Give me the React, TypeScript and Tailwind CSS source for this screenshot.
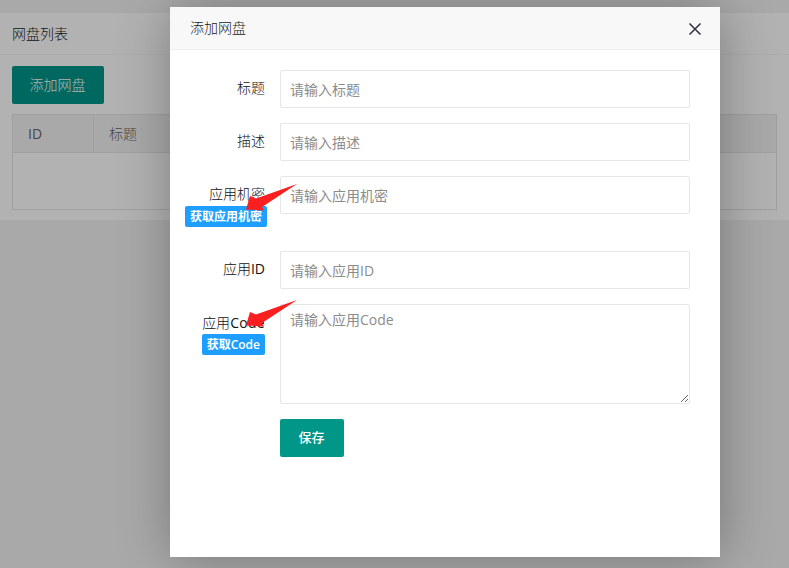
import React from "react";

const font = { fontFamily: '"Open Sans", "Noto Sans CJK SC", "Liberation Sans", sans-serif' };

function Arrow({ className }: { className: string }) {
  return (
    <svg className={className} width="56" height="32" viewBox="0 0 56 32">
      <path d="M54 1 L19 24 L21 27.5 L3 26.5 L7 13 L13 15.5 Z" fill="#fb1f1f" />
    </svg>
  );
}

function Row({ label, placeholder, mt }: { label: React.ReactNode; placeholder: string; mt: string }) {
  return (
    <div className={`flex ${mt}`}>
      <div className="w-[95px] shrink-0 text-right text-sm font-light leading-[36px] text-[#111]">{label}</div>
      <input
        placeholder={placeholder}
        className="ml-[15px] h-[38px] w-[410px] rounded-[2px] border border-[#e6e6e6] bg-white pl-[9px] pr-[10px] text-sm text-[#333] outline-none placeholder:text-[#8c8c8c]"
      />
    </div>
  );
}

function Tag({ children }: { children: React.ReactNode }) {
  return (
    <span className="flex h-[21px] items-center rounded-[2px] bg-[#1e9fff] px-[5px] text-xs font-semibold text-white">
      {children}
    </span>
  );
}

export default function App() {
  return (
    <div className="relative h-[568px] w-[789px] overflow-hidden bg-[#f2f2f2]" style={font}>
      <div className="pt-[13px]">
        <div className="bg-white pb-[10px]">
          <div className="h-[42px] border-b border-[#f6f6f6] px-3 text-sm font-light leading-[41px] text-[#222]">网盘列表</div>
          <div className="px-3 pt-[11px]">
            <button className="h-[38px] w-[92px] rounded-[2px] bg-[#009688] pr-[1px] text-sm font-light text-white">添加网盘</button>
            <div className="mt-[10px] h-[96px] border border-[#e6e6e6]">
              <div className="flex h-[38px] border-b border-[#e6e6e6] bg-[#f2f2f2] text-sm leading-[38px] text-[#666]">
                <div className="w-[81px] border-r border-[#e6e6e6] pl-[15px]">ID</div>
                <div className="pl-[15px] font-light">标题</div>
              </div>
            </div>
          </div>
        </div>
      </div>

      <div className="absolute inset-0 bg-black/30" />

      <div className="absolute left-[170px] top-[7px] h-[550px] w-[550px] bg-white shadow-[1px_1px_50px_rgba(0,0,0,0.3)]">
        <div className="relative h-[43px] border-b border-[#eeeeee] bg-[#f8f8f8] pl-[20px] text-sm font-light leading-[41px] text-[#222]">
          添加网盘
          <svg className="absolute right-[18px] top-[15px]" width="14" height="14" viewBox="0 0 14 14">
            <path d="M1.5 1.5 L12.5 12.5 M12.5 1.5 L1.5 12.5" stroke="#2f2f3f" strokeWidth="1.5" fill="none" />
          </svg>
        </div>
        <div className="pt-5">
          <Row label="标题" placeholder="请输入标题" mt="mt-0" />
          <Row label="描述" placeholder="请输入描述" mt="mt-[15px]" />
          <div className="relative">
            <Row label="应用机密" placeholder="请输入应用机密" mt="mt-[15px]" />
            <div className="absolute left-[15px] top-[30px]">
              <Tag>获取应用机密</Tag>
            </div>
            <Arrow className="absolute left-[73px] top-[7px]" />
          </div>
          <Row label={<>应用<span className="font-normal">ID</span></>} placeholder="请输入应用ID" mt="mt-[37px]" />
          <div className="relative mt-[15px] flex">
            <div className="flex w-[95px] shrink-0 flex-col items-end pt-[9px] text-sm font-light leading-[20px] text-[#111]">
              <div>应用<span className="font-normal tracking-[0.3px]">Code</span></div>
              <div className="mt-[1px]">
                <Tag>获取Code</Tag>
              </div>
            </div>
            <textarea
              placeholder="请输入应用Code"
              className="ml-[15px] h-[100px] w-[410px] rounded-[2px] border border-[#e6e6e6] bg-white pl-[9px] pr-[10px] py-[5px] text-sm leading-[20px] text-[#333] outline-none placeholder:text-[#8c8c8c]"
            />
            <Arrow className="absolute left-[73px] top-[-5px]" />
          </div>
          <button className="ml-[110px] mt-[15px] h-[38px] w-[64px] rounded-[2px] bg-[#009688] pr-[1px] pb-[1px] text-[13px] font-medium text-white">
            保存
          </button>
        </div>
      </div>
    </div>
  );
}
